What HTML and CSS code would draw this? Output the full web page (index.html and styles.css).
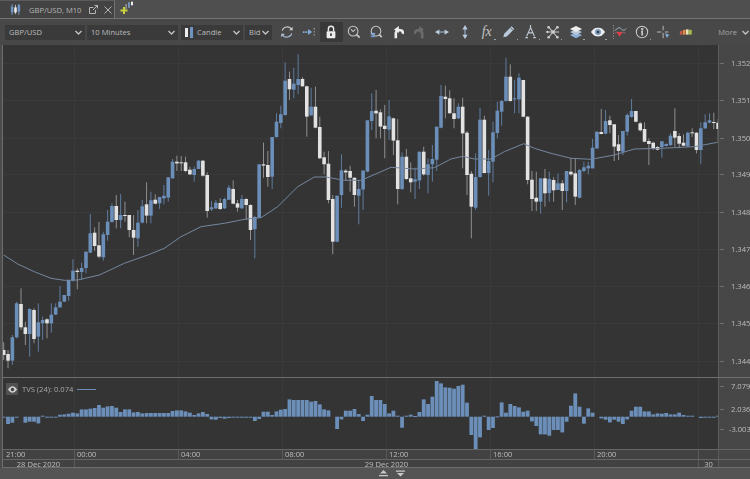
FILE: index.html
```html
<!DOCTYPE html>
<html lang="en">
<head>
<meta charset="utf-8">
<title>GBP/USD, M10</title>
<link rel="stylesheet" href="styles.css">
</head>
<body>
<div class="app">
  <header class="tabbar">
    <div class="tab">
      <svg class="tab-icon" width="11" height="11" viewBox="0 0 13 13"><path class="st-blue" d="M2.5 0v13M10.5 0v13"/><path class="st-white" d="M6.5 1v11"/><rect class="f-blue" x="1" y="3" width="3" height="7"/><rect class="f-white" x="5" y="4" width="3" height="6"/><rect class="f-blue" x="9" y="1" width="3" height="8"/></svg>
      <span class="tab-title">GBP/USD, M10</span>
      <svg class="tab-pop" width="9" height="9" viewBox="0 0 9 9"><path class="st-grey" d="M.5 2.5h4M.5 2.5v6h6v-3.5M4 5l4.500-4.500M5.500.5h3v3"/></svg>
      <svg class="tab-close" width="8" height="8" viewBox="0 0 8 8"><path class="st-grey" d="M.5.500l7 7M7.500.500l-7 7"/></svg>
    </div>
    <svg class="tab-new" width="13" height="13" viewBox="0 0 13 13"><path class="st-grey" d="M6 3v5M9 1v6M12 0v5"/><rect class="f-blue" x="8" y="2" width="2" height="4"/><rect class="f-white" x="11" y="1" width="2" height="3"/><path class="st-plus" d="M4 6v7M.5 9.500h7"/></svg>
  </header>

  <nav class="toolbar">
    <div class="select sel-symbol"><span>GBP/USD</span><svg class="chev" width="7" height="5" viewBox="0 0 7 5"><path d="M.5 1l3 3 3-3"/></svg></div>
    <div class="select sel-period"><span>10 Minutes</span><svg class="chev" width="7" height="5" viewBox="0 0 7 5"><path d="M.5 1l3 3 3-3"/></svg></div>
    <div class="select sel-type">
      <svg class="candle-mini" width="8" height="11" viewBox="0 0 8 11"><rect class="f-white" x="0" y="1" width="3" height="9"/><rect class="f-blue" x="5" y="0" width="3" height="11"/></svg>
      <span>Candle</span><svg class="chev" width="7" height="5" viewBox="0 0 7 5"><path d="M.5 1l3 3 3-3"/></svg></div>
    <div class="select sel-side"><span>Bid</span><svg class="chev" width="7" height="5" viewBox="0 0 7 5"><path d="M.5 1l3 3 3-3"/></svg></div>

    <div class="tools">
      <i class="tool"><svg viewBox="0 0 16 16"><path class="st-light" d="M2.500 6.500A6 6 0 0 1 13 4.500"/><path class="st-sky1" d="M13.500 9.500A6 6 0 0 1 3 11.500"/><path class="f-light" d="M14.500 2v4h-4z"/><path class="f-pale" d="M1.500 14v-4h4z"/></svg></i>
      <i class="tool"><svg viewBox="0 0 16 16"><path class="st-sky2" d="M1 8h8"/><path class="f-sky" d="M7 4.500 11.500 8 7 11.500z"/><path class="st-dots" d="M14 3.500v9"/></svg></i>
      <i class="tool tool-on"><svg viewBox="0 0 16 16"><path class="st-white2" d="M5 7V4.500a3 3 0 0 1 6 0V7"/><rect class="f-white" x="3" y="7" width="10" height="8" rx="1"/><rect class="f-dark" x="7" y="9.500" width="2" height="3"/></svg></i>
      <i class="tool"><svg viewBox="0 0 16 16"><circle class="st-light" cx="7" cy="7" r="5.500"/><path class="st-light" d="M4.500 5 7 7.500 9.500 5"/><path class="st-light2" d="M11 11l3.500 3.500"/></svg></i>
      <i class="tool"><svg viewBox="0 0 16 16"><circle class="st-light" cx="8" cy="7" r="5.500"/><path class="st-light2" d="M12 11l2.500 3"/><rect class="f-sky" x="2" y="9" width="5" height="2"/><rect class="f-blue" x="2" y="12" width="5" height="2"/></svg></i>
      <i class="tool"><svg viewBox="0 0 16 16"><path class="st-white3" d="M5.500 15V10a3.500 3.500 0 0 1 3.500-4h2a2.500 2.500 0 0 1 2 4"/><path class="f-white" d="M9 1v8L3.500 5z"/></svg></i>
      <i class="tool"><svg viewBox="0 0 16 16"><path class="st-dim3" d="M10.500 15V10a3.500 3.500 0 0 0-3.500-4H5a2.500 2.500 0 0 0-2 4"/><path class="f-dim" d="M7 1v8l5.500-4z"/></svg></i>
      <i class="tool"><svg viewBox="0 0 16 16"><path class="st-sky" d="M2 8h12"/><path class="f-pale" d="M5 5v6L0 8zM11 5v6l5-3z"/></svg></i>
      <i class="tool"><svg viewBox="0 0 16 16"><path class="st-sky" d="M8 2v12"/><path class="f-pale" d="M5 5h6L8 0zM5 11h6l-3 5z"/></svg></i>
      <i class="tool tool-fx"><span>fx</span><b class="hint"></b></i>
      <i class="tool"><svg viewBox="0 0 16 16"><path class="f-pale" d="M11 1.500l3 3-8.500 8.500-4 1 1-4z"/><path class="st-dark1" d="M9.500 3l3 3"/></svg><b class="hint"></b></i>
      <i class="tool"><svg viewBox="0 0 16 16"><path class="st-pale" d="M3 13 7.500 3 12 13M5 9h5M1.500 14.500h3M10.500 14.500h3M7.500 0v3"/></svg><b class="hint"></b></i>
      <i class="tool"><svg viewBox="0 0 16 16"><path class="st-light" d="M8 8 3 2.500M8 8l5-5.500M8 8 3 14M8 8l5 6M8 8H1M8 8h7"/><circle class="f-light" cx="8" cy="8" r="2"/><circle class="f-light" cx="3" cy="2.500" r="1.500"/><circle class="f-light" cx="13" cy="2.500" r="1.500"/><circle class="f-light" cx="3" cy="14" r="1.500"/><circle class="f-light" cx="13" cy="14" r="1.500"/><circle class="f-light" cx="1.500" cy="8" r="1.300"/></svg><b class="hint"></b></i>
      <i class="tool"><svg viewBox="0 0 16 16"><path class="f-sky2" d="M8 8.500l7 3-7 3.500-7-3.500z"/><path class="f-pale" d="M8 5l7 3-7 3.500L1 8z"/><path class="f-white" d="M8 1l7 3.500L8 8 1 4.500z"/></svg><b class="hint"></b></i>
      <i class="tool"><svg viewBox="0 0 16 16"><path class="f-white" d="M0 8c3-4.500 5-5 8-5s5 .5 8 5c-3 4.500-5 5-8 5s-5-.5-8-5z"/><circle class="f-steel" cx="8" cy="8" r="3.500"/><circle class="f-dark" cx="8" cy="8" r="1.500"/></svg><b class="hint"></b></i>
      <i class="tool"><svg viewBox="0 0 16 16"><path class="st-dots2" d="M.5 0v16"/><path class="st-pale1" d="M2 6c2 0 3-3 5-3s3 3 5 3 2-1 3-2"/><path class="f-red" d="M4 8h7l-3.500 5.500z"/><path class="st-redline" d="M2 9c2 0 1-1 3-1M10 8c2 0 2 1 4 1"/></svg></i>
      <i class="tool"><svg viewBox="0 0 16 16"><circle class="st-light" cx="8" cy="8" r="6.500"/><rect class="f-light" x="7" y="3.500" width="2.500" height="2"/><path class="st-light2" d="M7 7.200h1.200V12"/></svg><b class="hint"></b></i>
      <i class="tool"><svg viewBox="0 0 16 16"><path class="st-light1" d="M7 1v5M7 9v6M0 8h5M9 8h4"/><path class="f-sky" d="M9 9.500l5.500 2-2 1-1 2.500z"/></svg></i>
      <i class="tool"><svg viewBox="0 0 16 16"><rect class="f-red2" x="1" y="7" width="3" height="4"/><rect class="f-orange" x="4.500" y="5.500" width="3" height="5.500"/><rect class="f-pale2" x="8" y="5" width="3" height="6"/><rect class="f-lime" x="11.500" y="5.500" width="3" height="5.500"/></svg></i>
    </div>
    <div class="more"><span>More</span><svg class="chev" width="7" height="5" viewBox="0 0 7 5"><path d="M.5 1l3 3 3-3"/></svg></div>
  </nav>

  <main class="chart">
    <svg id="main" class="plot" width="715" height="332" viewBox="2 45 715 332"></svg>
    <div class="axis" id="priceAxis"></div>
    <div class="sub">
      <svg id="sub" class="plot" width="715" height="72" viewBox="2 377 715 72"></svg>
      <div class="legend">
        <span class="eye"><svg width="9" height="7" viewBox="0 0 11 8"><path class="f-light" d="M0 4c2-3 3.500-4 5.500-4s3.500 1 5.500 4c-2 3-3.500 4-5.500 4S2 7 0 4z"/><circle class="f-dark" cx="5.500" cy="4" r="2"/></svg></span>
        <span class="legend-text">TVS (24): 0.074</span>
        <span class="legend-line"></span>
      </div>
    </div>
    <div class="axis axis-sub" id="subAxis"></div>
    <div class="times">
      <span class="t-first">21:00</span><span>00:00</span><span>04:00</span><span>08:00</span><span>12:00</span><span>16:00</span><span>20:00</span><span class="t-last"></span>
    </div>
    <div class="axis-fill"></div>
    <div class="dates">
      <span class="d-first">28 Dec 2020</span><span class="d-mid">29 Dec 2020</span><span class="d-last">30</span>
    </div>
    <div class="axis-fill"></div>
  </main>

  <footer class="status">
    <svg width="9" height="7" viewBox="0 0 9 7"><path class="f-pale3" d="M4.500 0 8 3.500H1zM0 5h9v1.200H0z"/></svg>
    <svg width="9" height="7" viewBox="0 0 9 7"><path class="f-pale3" d="M0 .5h9v1.200H0zM1 3h7L4.500 6.500z"/></svg>
  </footer>
</div>
<script src="chart.js"></script>
</body>
</html>
```

FILE: styles.css
```css
* { box-sizing: border-box; }
html, body { margin: 0; height: 100%; overflow: hidden; background: #4c4c4c; }
body { font-family: "Open Sans", "Liberation Sans", sans-serif; font-size: 7.600px; color: #bdbdbd; }
.app { width: 750px; height: 479px; display: flex; flex-direction: column; filter: blur(0.5px); overflow: hidden; }

.tabbar { height: 19px; display: flex; align-items: center; background: #4f4f4f; border-bottom: 1px solid #737373; }
.tab { width: 115px; height: 18px; background: #434343; border-right: 1px solid #737373; border-top: 1px solid #5c5c5c; display: flex; align-items: center; padding-left: 10px; }
.tab-title { margin-left: 8px; width: 60px; color: #b4b4b4; white-space: nowrap; }
.tab-pop { margin-left: 0; }
.tab-close { margin-left: 6px; }
.tab-new { margin-left: 5px; margin-top: -4px; }

.toolbar { height: 26px; display: flex; align-items: center; background: #484848; padding-left: 5px; }
.select { height: 15px; background: #3a3a3a; display: flex; align-items: center; padding: 0 3px 0 4px; margin-right: 2px; color: #bcbcbc; }
.select span { flex: 1; white-space: nowrap; }
.chev { fill: none; stroke: #c4c4c4; stroke-width: 1.300; flex: none; }
.sel-symbol { width: 80px; }
.sel-period { width: 91px; margin-right: 3px; }
.sel-type { width: 62px; }
.sel-side { width: 27px; margin-right: 4px; }
.candle-mini { margin-right: 4px; }
.tools { display: flex; align-items: center; }
.tool { width: 22.200px; height: 20px; display: flex; align-items: center; justify-content: center; position: relative; font-style: normal; }
.tool svg { width: 14px; height: 14px; }
.tool-on { background: #393939; }
.tool-fx span { font-family: "Liberation Serif", serif; font-style: italic; font-size: 14px; color: #c4c4c4; line-height: 1; }
.hint { position: absolute; right: 2px; bottom: 2px; width: 1.500px; height: 1.500px; background: #a0a0a0; }
.more { margin-left: auto; margin-right: 1px; display: flex; align-items: center; gap: 5px; color: #a6a6a6; }

.chart { display: grid; grid-template-columns: 715px 33px; grid-template-rows: 332px 72px 10px 8px; margin-left: 2px; border-left: 1px solid #6e6e6e; width: 749px; border-bottom: 1px solid #6e6e6e; height: 423px; flex: none; }
.plot { display: block; background: #343434; }
.sub { position: relative; border-top: 1px solid #6e6e6e; height: 72px; overflow: hidden; }
.axis { position: relative; background: #474747; border-left: 1px solid #5c5c5c; overflow: hidden; }
.axis-sub { border-top: 1px solid #6e6e6e; }
.axis-fill { background: #474747; border-left: 1px solid #5c5c5c; border-top: 1px solid #666; }
.tick { position: absolute; left: 1px; height: 1px; width: 4px; background: #6e6e6e; }
.price { position: absolute; left: 12px; line-height: 10px; white-space: nowrap; color: #bdbdbd; }
.price-neg { left: 10px; }

.legend { position: absolute; left: 3px; top: 5px; display: flex; align-items: center; }
.eye { width: 12px; height: 12px; background: #525252; display: flex; align-items: center; justify-content: center; border-radius: 1px; }
.legend-text { margin-left: 4px; color: #a8a8a8; white-space: nowrap; }
.legend-line { width: 19px; height: 1px; background: #6d8db5; margin-left: 4px; }

.times, .dates { display: flex; background: #424242; border-top: 1px solid #666; color: #bdbdbd; line-height: 9px; }
.times span { width: 104px; flex: none; padding-left: 2px; border-left: 1px solid #5a5a5a; white-space: nowrap; }
.times .t-first { width: 71px; border-left: 0; padding-left: 3px; }
.times .t-last { width: 20px; }
.dates { line-height: 8px; }
.dates span { flex: none; text-align: center; border-left: 1px solid #5a5a5a; white-space: nowrap; }
.dates .d-first { width: 71px; border-left: 0; }
.dates .d-mid { width: 624px; }
.dates .d-last { width: 20px; }

.status { flex: 1; background: #545454; display: flex; align-items: center; gap: 8px; padding-left: 379px; }

.candle-b { fill: #6c8fba; }
.candle-w { fill: #e2e2e2; }
.wick-b { stroke: #5f7c9f; stroke-width: 1; }
.wick-w { stroke: #8f8f8f; stroke-width: 1; }
.bar { fill: #6c8fba; }
.ma { fill: none; stroke: #74879e; stroke-width: 1; }
.grid { stroke: #3a3a3a; stroke-width: 1; }

.f-blue { fill: #6f93c0; } .f-white { fill: #ededed; } .f-light { fill: #cfcfcf; } .f-sky { fill: #86aedb; } .f-sky2 { fill: #8eb0d6; }
.f-pale { fill: #b9c9dc; } .f-pale2 { fill: #e9e3b8; } .f-pale3 { fill: #c9c9c9; } .f-dark { fill: #3e3e3e; } .f-dim { fill: #6b6b6b; }
.f-steel { fill: #7b9dc3; } .f-red { fill: #e0404a; } .f-red2 { fill: #c85a4a; } .f-orange { fill: #e08a4a; } .f-lime { fill: #a8c04a; }
.st-blue, .st-white, .st-grey, .st-plus, .st-light, .st-light1, .st-light2, .st-sky, .st-sky1, .st-sky2, .st-dots, .st-dots2, .st-white2, .st-white3, .st-dim3, .st-pale, .st-pale1, .st-redline, .st-dark1 { fill: none; }
.st-blue { stroke: #7f9fc6; } .st-white { stroke: #cfcfcf; } .st-grey { stroke: #b5b5b5; }
.st-plus { stroke: #c8d23c; stroke-width: 2; }
.st-light { stroke: #c8c8c8; stroke-width: 1.200; } .st-light1 { stroke: #c8c8c8; stroke-width: 1; } .st-light2 { stroke: #c8c8c8; stroke-width: 2; }
.st-sky { stroke: #9db8d6; stroke-width: 1.200; } .st-sky1 { stroke: #a9bfd8; stroke-width: 1.200; } .st-sky2 { stroke: #86aedb; stroke-width: 2; stroke-dasharray: 2 1; }
.st-dots { stroke: #a0a0a0; stroke-width: 1.500; stroke-dasharray: 1.500 2; } .st-dots2 { stroke: #9a9a9a; stroke-width: 1; stroke-dasharray: 1.500 1.500; }
.st-white2 { stroke: #ededed; stroke-width: 1.600; } .st-white3 { stroke: #ededed; stroke-width: 3; } .st-dim3 { stroke: #6b6b6b; stroke-width: 3; }
.st-pale { stroke: #c0c8d2; stroke-width: 1.300; } .st-pale1 { stroke: #a9bcd2; stroke-width: 1; } .st-redline { stroke: #b06a6a; stroke-width: 1; } .st-dark1 { stroke: #484848; stroke-width: 1; }
```

FILE: chart.js
```js
// Candle rows as read off the reference: [top, bottom, high, low, colour], in screen px x3 around each segment's origin.
const SEGMENTS = [
  { y0: 180, rows: [
    [510,525,487,540,'w'],[522,542,510,565,'w'],[472,542,465,555,'b'],[370,472,365,475,'b'],[372,442,325,450,'w'],[442,462,425,495,'w'],
    [387,462,385,530,'b'],[390,477,385,490,'w'],[427,470,370,515,'b'],[420,430,410,480,'b'],[418,430,415,475,'w'],[404,430,370,458,'b'],
    [382,404,370,405,'b'],[365,382,318,383,'b'],[345,365,345,365,'b'],[300,348,300,362,'b'],[272,302,238,305,'b'],[272,276,265,328,'w'],
    [264,276,248,300,'b'],[215,264,215,280,'b'],[160,218,102,220,'b'],[158,198,142,212,'w'],[196,230,126,235,'w'],[163,232,155,242,'b'],
    [125,165,90,182,'b'],[78,126,70,128,'b'],[78,120,45,145,'w'],[105,120,42,145,'b'],[105,107,65,125,'w'],[105,150,105,172,'w']
  ]},
  { y0: 45, rows: [
    [555,578,510,630,'w'],[533,580,495,605,'b'],[484,533,465,535,'b'],[478,512,412,535,'w'],[466,512,440,535,'b'],[464,476,448,478,'w'],
    [456,475,455,492,'b'],[452,460,420,478,'b'],[397,458,397,470,'b'],[350,400,342,400,'b'],[350,355,332,378,'w'],[352,354,333,378,'w'],
    [352,378,335,382,'w'],[374,388,365,390,'w'],[372,390,365,410,'b'],[347,372,345,372,'b'],[347,392,345,395,'w'],[390,498,382,518,'w'],
    [487,493,468,498,'b'],[473,490,465,492,'b'],[474,492,460,495,'w'],[462,490,458,492,'b'],[428,464,420,465,'b'],[432,476,406,478,'w'],
    [475,488,465,500,'w'],[462,490,450,492,'b'],[462,480,460,525,'w'],[480,555,478,585,'w'],[516,553,512,640,'b'],[358,518,358,520,'b'],
    [358,362,293,398,'w'],[360,396,318,425,'w'],[276,395,276,432,'b'],[230,276,205,278,'b'],[208,234,182,250,'b'],[107,210,52,212,'b'],
    [102,133,80,165,'w'],[116,134,68,160,'b'],[102,120,28,148,'b'],[102,124,96,125,'w'],[124,215,122,275,'w'],[185,211,128,212,'b'],
    [185,248,125,250,'w'],[246,340,215,342,'w'],[337,358,320,388,'w'],[356,465,318,475,'w'],[462,590,450,628,'w'],[452,590,452,592,'b'],
    [376,450,328,488,'b'],[377,382,372,408,'w'],[378,398,362,440,'w'],[398,450,398,485,'w'],[432,452,405,538,'b'],[377,433,375,495,'b'],[226,380,226,382,'b']
  ]},
  { y0: 45, rows: [
    [198,228,145,255,'b'],[197,205,135,280,'w'],[202,245,193,280,'w'],[242,252,180,340,'w'],[214,254,165,285,'b'],[220,287,218,330,'w'],
    [286,432,222,478,'w'],[335,432,322,435,'b'],[335,402,312,405,'w'],[400,412,352,442,'w'],[403,410,368,462,'b'],[320,406,320,432,'b'],
    [320,388,305,392,'w'],[358,390,340,445,'b'],[342,358,300,410,'b'],[245,344,245,378,'b'],[153,248,120,250,'b'],[155,162,122,220,'w'],
    [160,205,136,205,'w'],[205,222,160,250,'w'],[185,220,175,222,'b'],[185,265,158,370,'w'],[263,390,258,450,'w'],[386,485,378,580,'w'],
    [396,488,325,495,'b'],[224,396,188,398,'b'],[224,384,212,385,'w'],[348,384,315,452,'b'],[262,350,230,412,'b'],[197,264,170,280,'b'],
    [168,200,165,242,'b'],[95,168,38,170,'b'],[95,168,58,170,'w'],[160,163,105,205,'b'],[98,163,85,205,'b'],[105,215,105,217,'w'],
    [215,405,213,418,'w'],[404,462,378,498,'w'],[458,470,380,498,'w'],[400,470,400,506,'b'],[400,445,372,485,'w'],[402,444,380,470,'b']
  ]},
  { y0: 45, rows: [
    [405,436,397,470,'w'],[415,435,385,435,'b'],[415,438,405,495,'w'],[378,438,378,472,'b'],[380,388,338,392,'w'],[385,455,340,480,'w'],
    [375,458,372,460,'b'],[367,378,350,382,'b'],[362,370,350,388,'b'],[308,370,282,370,'b'],[260,310,260,312,'b'],[261,267,192,268,'w'],
    [228,266,195,268,'b'],[226,240,212,265,'w'],[238,305,238,348,'w'],[298,318,270,345,'w'],[258,320,258,330,'b'],[210,260,205,272,'b'],
    [198,216,162,218,'b'],[198,230,198,232,'w'],[235,256,230,260,'w'],[252,290,232,292,'w'],[288,297,280,360,'w'],[293,312,290,315,'w'],
    [306,314,303,316,'w'],[289,306,288,338,'b'],[297,303,295,304,'b'],[272,300,265,303,'b'],[258,278,190,305,'w'],[273,296,265,310,'w'],
    [293,302,268,304,'w'],[263,304,260,306,'b'],[262,264,250,276,'w'],[263,315,262,325,'w'],[250,315,232,358,'b'],[232,250,208,252,'b'],
    [226,233,205,235,'b'],[231,233,203,252,'w'],[233,252,222,290,'w']
  ]}
];

const BARS = [
  -2,-22,-18,-2,0,-18,-15,-15,-20,3,-1,-1,-1,6,7,9,12,10,22,22,24,26,35,27,31,32,27,14,22,22,13,14,10,11,11,11,11,11,11,17,19,19,16,12,5,10,14,8,
  -8,-9,-4,-6,-4,-1,-1,-2,-2,-3,-13,-7,15,15,5,16,21,23,52,50,50,50,50,45,47,37,22,19,0,-37,-8,18,18,23,8,-13,6,62,
  50,50,38,10,18,3,-33,3,6,2,14,52,38,60,107,100,88,87,84,92,96,42,-55,-97,-62,3,-40,-34,1,43,12,38,32,28,15,18,-14,-28,-53,-53,-57,-40,-40,-47,-15,33,70,30,-21,25,12,
  0,-5,-9,-17,-9,-15,-22,-8,18,30,30,16,16,7,10,9,11,7,7,12,5,3,3,0,-4,-1,-1,-1,3
];

const MA = [
  [0,180,[[8,225],[50,252],[100,275],[150,295],[190,301],[230,300],[295,285],[370,250]]],
  [130,45,[[50,630],[100,610],[150,575],[210,545],[280,535],[345,522],[390,518],[440,485],[500,425],[550,396],[585,396],[640,406],[690,406],[750,380]]],
  [370,45,[[60,367],[130,372],[190,368],[240,342],[275,334],[310,342],[360,342],[400,320],[458,296],[490,310]]],
  [550,45,[[0,325],[60,340],[120,343],[190,330],[250,312],[330,310],[430,305],[500,292]]]
];

const GRID_X = [73, 177, 281, 385, 489, 593, 697];
const PRICES = [[63,'1.35200'],[100,'1.35100'],[138,'1.35000'],[174,'1.34900'],[212,'1.34800'],[249,'1.34700'],[286,'1.34600'],[323,'1.34500'],[361,'1.34400']];
const SUB = [[385,'7.079',false],[408,'2.036',false],[428,'-3.003',true]];
const STEP = 4.33, FIRST = 2.7, BASE = 415.7;

function gridX(top, bottom) {
  return GRID_X.map(x => `<line class="grid" x1="${x + .5}" x2="${x + .5}" y1="${top}" y2="${bottom}"/>`).join('');
}

let main = gridX(45, 377);
main += PRICES.map(([y]) => `<line class="grid" x1="2" x2="717" y1="${y + .5}" y2="${y + .5}"/>`).join('');

let i = 0, wicks = '', bodies = '';
for (const seg of SEGMENTS) {
  for (const [t, b, h, l, c] of seg.rows) {
    const cx = FIRST + STEP * i++;
    const Y = v => (seg.y0 + v / 3).toFixed(1);
    wicks += `<line class="wick-${c}" x1="${cx.toFixed(2)}" x2="${cx.toFixed(2)}" y1="${Y(h)}" y2="${Y(l)}"/>`;
    bodies += `<rect class="candle-${c}" x="${(cx - 1.8).toFixed(2)}" y="${Y(t)}" width="3.6" height="${Math.max((b - t) / 3, 1).toFixed(1)}"/>`;
  }
}
main += wicks + bodies;
const maPts = MA.flatMap(([x0, y0, pts]) => pts.map(([x, y]) => `${(x0 + x / 3).toFixed(1)},${(y0 + y / 3).toFixed(1)}`)).join(' ');
main += `<polyline class="ma" points="${maPts}"/>`;
document.getElementById('main').innerHTML = main;

let sub = gridX(377, 449);
BARS.forEach((v, n) => {
  if (!v) return;
  const cx = FIRST + STEP * n, h = Math.abs(v) / 3;
  const y = v > 0 ? BASE - h : BASE;
  sub += `<rect class="bar" x="${(cx - 1.9).toFixed(2)}" y="${y.toFixed(1)}" width="3.8" height="${Math.max(h, 1).toFixed(1)}"/>`;
});
document.getElementById('sub').innerHTML = sub;

function labels(el, rows, top) {
  el.innerHTML = rows.map(([y, text, neg]) =>
    `<span class="tick" style="top:${y - top}px"></span><span class="price${neg ? ' price-neg' : ''}" style="top:${y - top - 5}px">${text}</span>`
  ).join('');
}
labels(document.getElementById('priceAxis'), PRICES, 45);
labels(document.getElementById('subAxis'), SUB, 377);
```
